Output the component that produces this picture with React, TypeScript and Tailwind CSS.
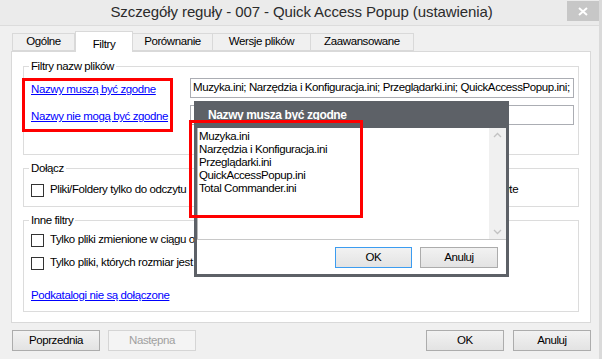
import React from 'react';

const font = { fontFamily: '"Liberation Sans", Arial, sans-serif' };

// -- Small pieces --
const Checkbox = ({ label, className = '' }: { label: string; className?: string }) => (
  <div className={`flex items-center h-[16px] ${className}`}>
    <span className="w-[13px] h-[13px] border border-[#333] bg-white shrink-0" />
    <span className="ml-[6px] text-[11.5px] text-black whitespace-nowrap">{label}</span>
  </div>
);

const Button = ({ label, disabled, focused, className = '' }: { label: string; disabled?: boolean; focused?: boolean; className?: string }) => (
  <div
    className={`h-[21px] flex items-center justify-center text-[11.5px] border ${
      disabled
        ? 'border-[#d5d5d5] bg-[#f4f4f4] text-[#a0a0a0]'
        : focused
          ? 'border-[#3c9cf0] bg-gradient-to-b from-[#f2f2f2] to-[#e3e3e3] text-black'
          : 'border-[#acacac] bg-gradient-to-b from-[#f2f2f2] to-[#e3e3e3] text-black'
    } ${className}`}
  >
    {label}
  </div>
);

const Link = ({ children }: { children: React.ReactNode }) => (
  <span className="text-[11.5px] text-[#0000ff] underline underline-offset-[1px] whitespace-nowrap">{children}</span>
);

const Group = ({ legend, className = '', children }: { legend: string; className?: string; children: React.ReactNode }) => (
  <fieldset className={`border border-[#dcdcdc] mx-[11px] pl-[7px] ${className}`}>
    <legend className="ml-[-2px] px-[2px] text-[11.5px] leading-[14px] text-black">{legend}</legend>
    {children}
  </fieldset>
);

const tabs = ['Ogólne', 'Filtry', 'Porównanie', 'Wersje plików', 'Zaawansowane'];
const tabWidths = ['w-[63px]', 'w-[58px]', 'w-[80px]', 'w-[98px]', 'w-[103px]'];

// -- Popup list dialog --
const NamesPopup = () => {
  const items = ['Muzyka.ini', 'Narzędzia i Konfiguracja.ini', 'Przeglądarki.ini', 'QuickAccessPopup.ini', 'Total Commander.ini'];
  return (
    <div className="absolute left-[194px] top-[101px] w-[315px] h-[176px] bg-[#5d6167] flex flex-col px-[3px] pb-[3px]">
      <div className="h-[27px] shrink-0 flex items-center pl-[11px] text-[12px] font-bold text-white">
        Nazwy musza być zgodne
      </div>
      <div className="flex-1 bg-white flex flex-col">
        <div className="h-[112px] flex border-b border-[#c8c8c8]">
          <div className="flex-1 border-l border-[#b9b9b9] pl-[1px] pt-[2px] text-[11.5px] leading-[13px] text-black">
            {items.map(i => (
              <div key={i}>{i}</div>
            ))}
          </div>
          <div className="w-[17px] bg-[#f0f0f0] flex flex-col justify-between items-center py-[4px] text-[#c2c2c2]">
            <svg width="9" height="6" viewBox="0 0 9 6"><path d="M1 5 L4.5 1.5 L8 5" stroke="currentColor" strokeWidth="1.3" fill="none" /></svg>
            <svg width="9" height="6" viewBox="0 0 9 6"><path d="M1 1 L4.5 4.5 L8 1" stroke="currentColor" strokeWidth="1.3" fill="none" /></svg>
          </div>
        </div>
        <div className="flex justify-end gap-[8px] pt-[7px] pr-[8px]">
          <Button label="OK" focused className="w-[77px]" />
          <Button label="Anuluj" className="w-[78px]" />
        </div>
      </div>
    </div>
  );
};

const App: React.FC = () => {
  return (
    <div className="relative w-[602px] h-[359px] overflow-hidden bg-[#f0f0f0] border-r-[3px] border-[#dadada] tracking-[-0.4px]" style={font}>
      {/* Title bar */}
      <div className="h-[26px] bg-[#ebebeb] border-b border-[#dcdcdc] flex items-center relative">
        <div className="flex-1 text-center text-[15px] tracking-[-0.1px] text-[#2b2b2b] pl-[4px]">
          Szczegóły reguły - 007 - Quick Access Popup (ustawienia)
        </div>
        <div className="absolute right-[0px] top-[1px] w-[32px] h-[20px] bg-[#c7c7c7] flex items-center justify-center">
          <svg width="10" height="9" viewBox="0 0 10 9"><path d="M1 1 L9 8 M9 1 L1 8" stroke="white" strokeWidth="2" /></svg>
        </div>
      </div>

      {/* Tabs */}
      <div className="h-[25px] flex items-end pl-[12px] relative z-10">
        {tabs.map((t, i) =>
          i === 1 ? (
            <div key={t} className={`${tabWidths[i]} h-[21px] mb-[-1px] bg-white border border-b-0 border-[#d9d9d9] flex items-start justify-center pt-[4px] text-[11.5px] text-black`}>
              {t}
            </div>
          ) : (
            <div key={t} className={`${tabWidths[i]} h-[18px] bg-[#f0f0f0] border border-[#d9d9d9] ${i === 0 ? '' : 'border-l-0'} flex items-center justify-center text-[11.5px] text-black`}>
              {t}
            </div>
          )
        )}
      </div>

      {/* Tab panel */}
      <div className="ml-[11px] w-[580px] h-[272px] bg-white border border-[#d9d9d9] pt-[7px]">
        <Group legend="Filtry nazw plików" className="h-[96px]">
          <div className="flex flex-col gap-[7px] pt-[5px]">
            <div className="flex items-center h-[20px]">
              <div className="w-[159px]"><Link>Nazwy muszą być zgodne</Link></div>
              <div className="w-[384px] h-[20px] border border-[#abadb3] flex items-center pl-[2px] text-[11.5px] text-black whitespace-nowrap overflow-hidden">
                Muzyka.ini; Narzędzia i Konfiguracja.ini; Przeglądarki.ini; QuickAccessPopup.ini;
              </div>
            </div>
            <div className="flex items-center h-[20px]">
              <div className="w-[159px]"><Link>Nazwy nie mogą być zgodne</Link></div>
              <div className="w-[384px] h-[20px] border border-[#abadb3]" />
            </div>
          </div>
        </Group>

        <Group legend="Dołącz" className="h-[46px] mt-[6px]">
          <div className="flex items-center pt-[7px]">
            <Checkbox label="Pliki/Foldery tylko do odczytu" className="w-[379px]" />
            <Checkbox label="Pliki/Foldery ukryte" />
          </div>
        </Group>

        <Group legend="Inne filtry" className="h-[99px] mt-[6px]">
          <div className="flex flex-col pt-[5px] gap-[7px]">
            <Checkbox label="Tylko pliki zmienione w ciągu ostatnich" />
            <Checkbox label="Tylko pliki, których rozmiar jest mniejszy niż" />
            <div className="pt-[4px]"><Link>Podkatalogi nie są dołączone</Link></div>
          </div>
        </Group>
      </div>

      {/* Bottom buttons */}
      <div className="flex items-center h-[21px] mt-[7px] pl-[12px] pr-[8px]">
        <Button label="Poprzednia" className="w-[88px]" />
        <Button label="Następna" disabled className="w-[88px] ml-[8px]" />
        <div className="flex-1" />
        <Button label="OK" className="w-[78px]" />
        <Button label="Anuluj" className="w-[78px] ml-[9px]" />
      </div>

      <NamesPopup />

      {/* Annotation boxes */}
      <div className="absolute left-[22px] top-[78px] w-[151px] h-[54px] border-[3px] border-[#ff0000]" />
      <div className="absolute left-[189px] top-[120px] w-[174px] h-[98px] border-[3px] border-[#ff0000]" />
    </div>
  );
};

export default App;
